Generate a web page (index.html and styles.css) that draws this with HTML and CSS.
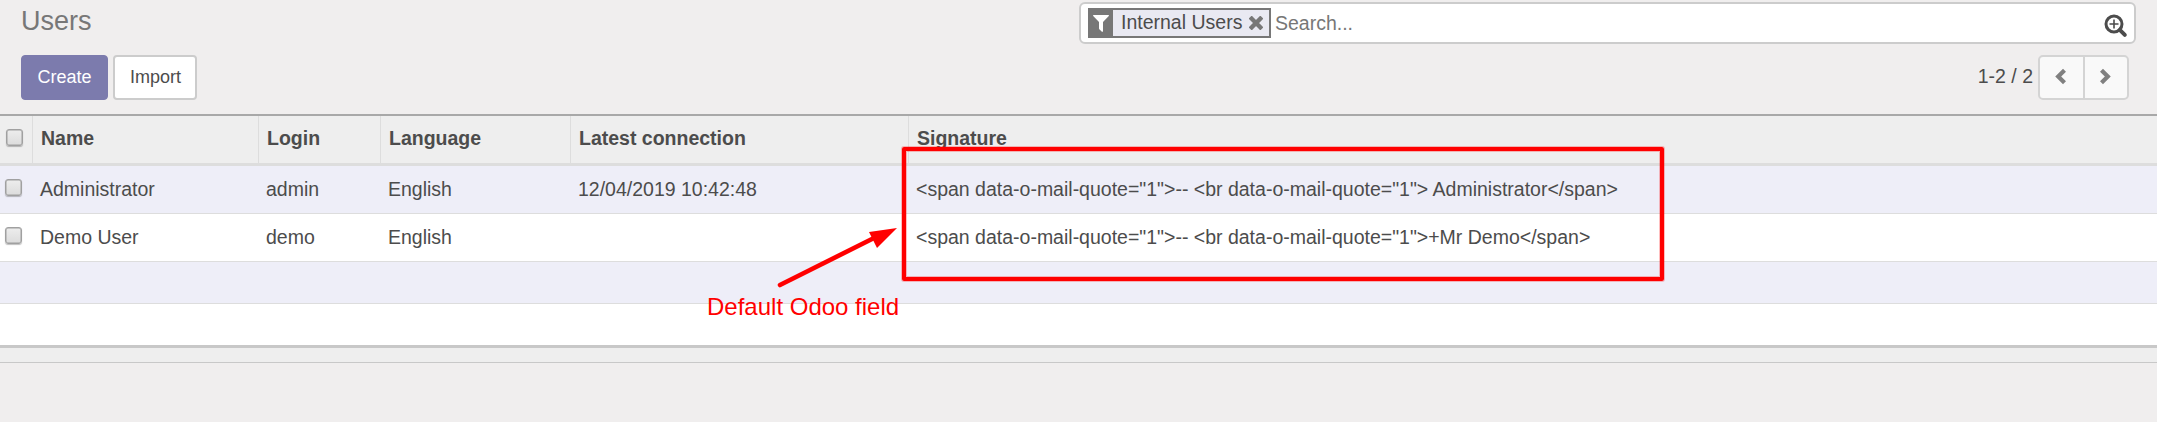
FILE: index.html
```html
<!DOCTYPE html>
<html lang="en">
<head>
<meta charset="utf-8">
<title>Users</title>
<link rel="stylesheet" href="styles.css">
</head>
<body>
<header class="control-panel">
  <div class="panel-left">
    <h1 class="title">Users</h1>
    <div class="buttons">
      <button class="btn btn-primary">Create</button>
      <button class="btn btn-default">Import</button>
    </div>
  </div>
  <div class="panel-right">
    <div class="search">
      <div class="facet">
        <span class="facet-icon"><svg width="16" height="17" viewBox="0 0 16 17"><path fill="#fff" d="M.6 0h14.800q.9.300.4 1.100L10 7v9.200q-.2.900-1.100.5L6.300 14.200 6 13.500V7L.2 1.100Q-.3.300.6 0z"/></svg></span>
        <span class="facet-label">Internal Users</span>
        <svg class="facet-remove" width="14" height="14" viewBox="0 0 14 14"><path d="M2.700 2.700l8.600 8.600M11.300 2.700l-8.600 8.600" stroke="#777" stroke-width="4.400" stroke-linecap="square"/></svg>
      </div>
      <span class="placeholder">Search...</span>
      <svg class="search-icon" width="24" height="24" viewBox="0 0 24 24" fill="none" stroke="#4c4c4c"><circle cx="10" cy="10" r="8" stroke-width="3"/><path d="M15.800 15.800l5 5" stroke-width="4" stroke-linecap="round"/><path d="M10 5.500v9M5.500 10h9" stroke-width="1.600"/></svg>
    </div>
    <div class="pager">
      <span class="pager-text">1-2 / 2</span>
      <div class="pager-buttons">
        <button class="pager-btn"><svg width="12" height="17" viewBox="0 0 12 17"><path d="M9.500 2.200L3.200 8.500l6.300 6.300" fill="none" stroke="#808080" stroke-width="4.200"/></svg></button>
        <button class="pager-btn"><svg width="12" height="17" viewBox="0 0 12 17"><path d="M1.500 2.200l6.300 6.300-6.300 6.300" fill="none" stroke="#808080" stroke-width="4.200"/></svg></button>
      </div>
    </div>
  </div>
</header>
<main class="list">
  <div class="row head">
    <div class="cell"><span class="check"></span></div>
    <div class="cell">Name</div>
    <div class="cell">Login</div>
    <div class="cell">Language</div>
    <div class="cell">Latest connection</div>
    <div class="cell">Signature</div>
  </div>
  <div class="row odd">
    <div class="cell"><span class="check"></span></div>
    <div class="cell">Administrator</div>
    <div class="cell">admin</div>
    <div class="cell">English</div>
    <div class="cell">12/04/2019 10:42:48</div>
    <div class="cell">&lt;span data-o-mail-quote="1"&gt;-- &lt;br data-o-mail-quote="1"&gt; Administrator&lt;/span&gt;</div>
  </div>
  <div class="row">
    <div class="cell"><span class="check"></span></div>
    <div class="cell">Demo User</div>
    <div class="cell">demo</div>
    <div class="cell">English</div>
    <div class="cell"></div>
    <div class="cell">&lt;span data-o-mail-quote="1"&gt;-- &lt;br data-o-mail-quote="1"&gt;+Mr Demo&lt;/span&gt;</div>
  </div>
  <div class="row odd blank"></div>
  <div class="row blank last"></div>
  <div class="foot"></div>
</main>
<div class="highlight"></div>
<svg class="arrow" width="130" height="70" viewBox="0 0 130 70"><path d="M10 60L108 11" stroke="#f00" stroke-width="4.600" stroke-linecap="round"/><path d="M127 3L99 7 107 23z" fill="#f00"/></svg>
<div class="note">Default Odoo field</div>
</body>
</html>
```

FILE: styles.css
```css
* { box-sizing: border-box; }
body {
  margin: 0;
  height: 422px;
  overflow: hidden;
  position: relative;
  background: #f0eeee;
  color: #4c4c4c;
  font: 19.5px/28px "Liberation Sans", Arial, sans-serif;
}
svg { display: block; flex: none; }
.control-panel {
  display: flex;
  justify-content: space-between;
  height: 116px;
  border-bottom: 2px solid #a8a8a8;
}
.panel-left { padding-left: 21px; }
.title {
  margin: 0;
  height: 55px;
  padding-top: 2px;
  font-size: 27px;
  line-height: 39px;
  font-weight: 400;
  color: #777;
}
.buttons { display: flex; gap: 5px; }
.btn {
  height: 45px;
  padding: 0;
  border-radius: 4px;
  font: 18px/27px "Liberation Sans", Arial, sans-serif;
}
.btn-primary { width: 87px; background: #7c7bad; border: 1px solid #7c7bad; color: #fff; }
.btn-default { width: 84px; padding-left: 1px; background: #fff; border: 2px solid #ccc; color: #4c4c4c; }
.panel-right { width: 1078px; padding-top: 2px; margin-left: auto; }
.search {
  display: flex;
  width: 1057px;
  height: 42px;
  padding: 4px 6px 4px 7px;
  border: 2px solid #ccc;
  border-radius: 6px;
  background: #fff;
}
.facet {
  display: flex;
  width: 183px;
  height: 30px;
  border: 2px solid #777;
  background: #e9e9f2;
}
.facet-icon { width: 23px; padding: 5px 0 0 3px; background: #777; }
.facet-label { padding-left: 8px; line-height: 25px; }
.facet-remove { margin: 6px 0 0 7px; }
.placeholder { padding-left: 4px; line-height: 31px; color: #777; }
.search-icon { margin: 6px 0 0 auto; }
.pager {
  display: flex;
  justify-content: flex-end;
  align-items: center;
  margin: 11px 28px 0 0;
  gap: 5px;
}
.pager-text { margin-top: -3px; }
.pager-buttons { display: flex; width: 91px; height: 45px; border: 2px solid #d4d4d4; border-radius: 5px; background: #f9f9f9; }
.pager-btn {
  flex: 1;
  display: flex;
  align-items: center;
  justify-content: center;
  padding: 0 0 2px;
  border: 0;
  background: none;
}
.pager-btn + .pager-btn { border-left: 2px solid #d4d4d4; }
.row {
  display: grid;
  grid-template-columns: 32px 226px 122px 190px 338px 1fr;
  height: 48px;
  border-bottom: 1px solid #ddd;
  background: #fff;
}
.cell { padding: 9px 0 0 8px; white-space: nowrap; }
.cell:first-child { padding: 13px 0 0 5px; }
.row.head { height: 50px; border-bottom: 3px solid #ddd; background: #eee; font-weight: 700; }
.head .cell { padding-top: 8px; }
.head .cell + .cell { border-left: 1px solid #ddd; }
.head .cell:first-child { padding: 13px 0 0 6px; }
.row.odd { background: #eeeef8; }
.row.blank { height: 42px; }
.row.last { height: 44px; border-bottom: 3px solid #c8c8c8; }
.foot { height: 15px; background: #eee; border-bottom: 1px solid #c8c8c8; }
.check {
  display: block;
  width: 17px;
  height: 17px;
  border: 1px solid #a0a0a0;
  border-radius: 3px;
  background: linear-gradient(#ededed, #dcdcdc);
  box-shadow: 0 1px 1px rgba(0, 0, 0, .25), inset 0 0 0 .5px #a0a0a0;
}
.highlight {
  position: absolute;
  left: 902px;
  top: 147px;
  width: 762px;
  height: 134px;
  border: 4px solid #f00;
  border-radius: 2px;
  box-shadow: 0 0 0 1px rgba(255, 0, 0, .25), inset 0 0 0 1px rgba(255, 0, 0, .25);
}
.arrow { position: absolute; left: 770px; top: 225px; }
.note { position: absolute; left: 707px; top: 293px; font-size: 24px; color: #f00; }
```
